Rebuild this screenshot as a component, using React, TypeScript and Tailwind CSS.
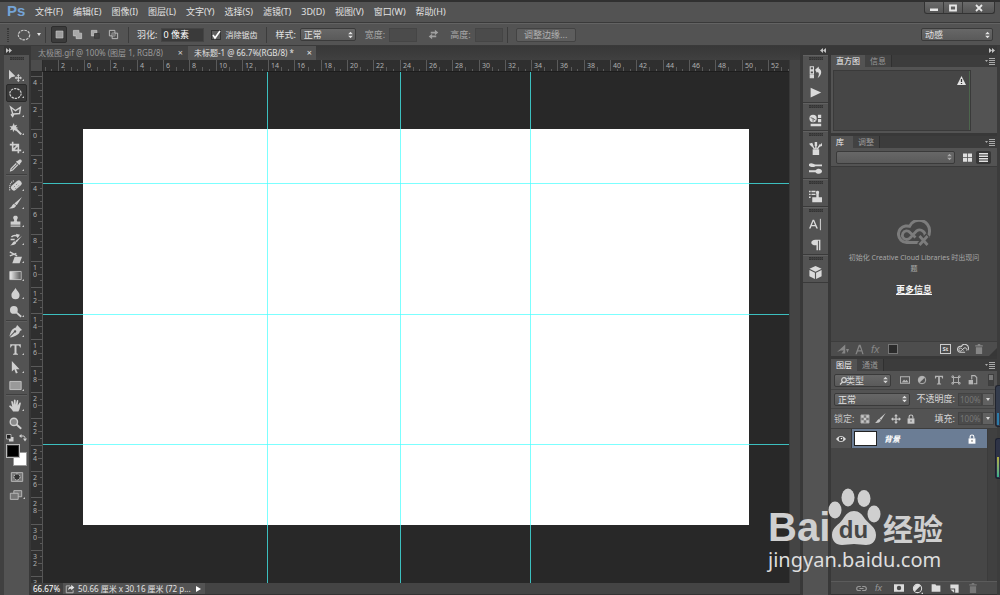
import type { ReactNode } from "react";

const UNIT = 26.3;

/* ---------- shared pieces ---------- */

function Icon({ children, size = "w-[14px] h-[14px]" }: { children: ReactNode; size?: string }) {
  return (
    <svg viewBox="0 0 16 16" className={`${size} shrink-0`} fill="currentColor" aria-hidden="true">
      {children}
    </svg>
  );
}

function UpDown() {
  return (
    <svg viewBox="0 0 6 8" className="pointer-events-none absolute top-1/2 right-[3px] h-[7px] w-[5px] -translate-y-1/2" fill="currentColor">
      <path d="M3 0 5.8 3H.2zM3 8 .2 5h5.6z" />
    </svg>
  );
}

function Drop({ label, value, className, pad = "pl-[3px]" }: { label: string; value: string; className: string; pad?: string }) {
  return (
    <span className={`relative block h-[13px] shrink-0 ${className}`}>
      <select
        aria-label={label}
        className={`block h-full w-full appearance-none rounded-[2px] border border-[#3a3a3a] bg-linear-to-b from-[#676767] to-[#5a5a5a] pr-2 leading-[11px] ${pad}`}
      >
        <option>{value}</option>
      </select>
      <UpDown />
    </span>
  );
}

function Grip() {
  return <div className="mx-auto h-[3px] w-[14px] border-y border-dotted border-[#333] bg-[#404040]" />;
}

function VLine() {
  return <div className="h-4 w-px shrink-0 bg-[#3c3c3c]" />;
}

function DoubleArrow({ left }: { left?: boolean }) {
  return (
    <svg viewBox="0 0 6 5" className="h-[5px] w-[6px]" fill="#c4c4c4">
      {left ? <path d="M3 0v5L0 2.5zM6 0v5L3 2.5z" /> : <path d="M0 0v5l3-2.5zM3 0v5l3-2.5z" />}
    </svg>
  );
}

/* ---------- menu and options bars ---------- */

const MENUS = ["文件(F)", "编辑(E)", "图像(I)", "图层(L)", "文字(Y)", "选择(S)", "滤镜(T)", "3D(D)", "视图(V)", "窗口(W)", "帮助(H)"];

function MenuBar() {
  return (
    <header className="flex h-[23px] shrink-0 items-start border-t-2 border-b border-t-[#303030] border-b-[#3a3a3a] bg-[#535353] pl-[7px]">
      <h1 className="w-7 font-[Arial,'Liberation_Sans',sans-serif] text-[15px] leading-[18px] font-bold text-[#74a3d6]">Ps</h1>
      <nav className="flex gap-[10px] text-[9px] leading-[20px]">
        {MENUS.map((m) => (
          <button key={m} className="whitespace-nowrap">{m}</button>
        ))}
      </nav>
      <div className="mr-[5px] ml-auto flex h-3 overflow-hidden rounded-b-[3px] border border-t-0 border-[#333] bg-linear-to-b from-[#6a6a6a] to-[#555] text-[#e8e8e8]">
        <button aria-label="最小化" className="flex w-[19px] items-center justify-center border-r border-[#3a3a3a]">
          <svg viewBox="0 0 8 8" className="h-2 w-2" fill="currentColor"><path d="M0 4.500h8v2.500H0z" /></svg>
        </button>
        <button aria-label="最大化" className="flex w-[19px] items-center justify-center border-r border-[#3a3a3a]">
          <svg viewBox="0 0 8 8" className="h-2 w-2" fill="none" stroke="currentColor" strokeWidth="1.800"><path d="M1 1.500h6v5H1z" /></svg>
        </button>
        <button aria-label="关闭" className="flex w-[31px] items-center justify-center">
          <svg viewBox="0 0 8 8" className="h-2 w-2" stroke="currentColor" strokeWidth="1.800"><path d="m1 1 6 6M7 1 1 7" /></svg>
        </button>
      </div>
    </header>
  );
}

const COMBINE: { name: string; art: ReactNode }[] = [
  { name: "新选区", art: <path d="M3 3h10v10H3z" fill="#9c9c9c" stroke="#ccc" /> },
  { name: "添加到选区", art: <path d="M2 2h8v4h4v8H6v-4H2z" fill="#a8a8a8" stroke="#ccc" /> },
  { name: "从选区减去", art: <><path d="M2 2h8v4H6v4H2z" fill="#a8a8a8" stroke="#ccc" /><path d="M6.500 6.500h7v7h-7z" fill="#444" stroke="#333" /></> },
  { name: "与选区交叉", art: <><path d="M2 2h8v8H2zM6 6h8v8H6z" fill="none" stroke="#bbb" strokeWidth="1.400" /><path d="M6 6h4v4H6z" fill="#777" /></> },
];

function OptionsBar() {
  return (
    <section className="flex h-[23px] shrink-0 items-center border-t border-b border-t-[#636363] border-b-[#3a3a3a] bg-[#535353] pl-[7px] text-[9px] whitespace-nowrap">
      <div className="mr-2 h-[14px] w-[2px] border-x border-dotted border-[#383838]" />
      <button aria-label="椭圆选框工具" className="flex items-center gap-[6px]">
        <Icon><ellipse cx="8" cy="8" rx="6.500" ry="5.500" fill="none" stroke="#c9c9c9" strokeWidth="1.300" strokeDasharray="3 1" /></Icon>
        <svg viewBox="0 0 4 3" className="h-[3px] w-1" fill="currentColor"><path d="M0 0h4L2 3z" /></svg>
      </button>
      <div className="mr-[5px] ml-1"><VLine /></div>
      <div className="flex gap-[2px]">
        {COMBINE.map((c, i) => (
          <button
            key={c.name}
            aria-label={c.name}
            className={i === 0 ? "flex h-[17px] w-4 items-center justify-center rounded-[2px] border border-[#2d2d2d] bg-[#3b3b3b]" : "flex h-[17px] w-4 items-center justify-center"}
          >
            <Icon size="w-[11px] h-[11px]">{c.art}</Icon>
          </button>
        ))}
      </div>
      <div className="mr-2 ml-[7px]"><VLine /></div>
      <label className="flex items-center gap-1">
        羽化:
        <input defaultValue="0 像素" className="h-[14px] w-[43px] border border-[#444] bg-[#3a3a3a] pl-px text-white" />
      </label>
      <label className="ml-[7px] flex items-center gap-1 text-[8px]">
        <span className="grid">
          <input type="checkbox" defaultChecked className="peer col-start-1 row-start-1 h-[10px] w-[10px] appearance-none border border-[#333] bg-[#5f5f5f]" />
          <svg viewBox="0 0 10 10" className="pointer-events-none col-start-1 row-start-1 hidden h-[10px] w-[10px] peer-checked:block" fill="none" stroke="#fff" strokeWidth="1.600"><path d="m2 5 2 3 5-7" /></svg>
        </span>
        消除锯齿
      </label>
      <div className="mr-2 ml-[9px]"><VLine /></div>
      <span className="mr-1">样式:</span>
      <Drop label="样式" value="正常" className="w-[56px]" />
      <label className="ml-[9px] flex items-center gap-1 text-[#a8a8a8]">
        宽度:
        <input className="h-[14px] w-7 border border-[#454545] bg-[#4b4b4b]" />
      </label>
      <button aria-label="互换宽高" className="mx-[11px] text-[#a0a0a0]">
        <Icon size="w-[11px] h-[11px]"><path d="M4 4h6V1l5 4-5 4V6.500H4zM12 12H6v3l-5-4 5-4v2.500h6z" /></Icon>
      </button>
      <label className="flex items-center gap-1 text-[#a8a8a8]">
        高度:
        <input className="h-[14px] w-7 border border-[#454545] bg-[#4b4b4b]" />
      </label>
      <div className="mr-2 ml-1"><VLine /></div>
      <button className="h-[14px] w-[60px] rounded-[2px] border border-[#434343] bg-[#5d5d5d] leading-[11px] text-[#b0b0b0]">调整边缘...</button>
      <div className="mr-[7px] ml-auto"><Drop label="工作区" value="动感" className="w-[72px]" /></div>
    </section>
  );
}

/* ---------- tool column ---------- */

const TOOLS: ({ name: string; art: ReactNode; plain?: boolean } | null)[] = [
  { name: "移动工具", art: <path d="M0 1v12l3-2.700L8 9zM11.500 6 13.500 8.300h-1.300v2h1.600V9L16 11l-2.200 2v-1.300h-1.600v2h1.300L11.500 16l-2-2.300h1.300v-2H9.200V13L7 11l2.200-2v1.300h1.600v-2H9.500z" /> },
  { name: "椭圆选框工具", art: <ellipse cx="8" cy="8" rx="7" ry="6" fill="none" stroke="currentColor" strokeWidth="1.400" strokeDasharray="3 1" /> },
  { name: "多边形套索工具", art: <path d="M2 2.500 8 7l6-4-1 7.500-7 .500-1.500 3L3 12l1.500-1.500z" fill="none" stroke="currentColor" strokeWidth="1.700" /> },
  { name: "快速选择工具", art: <><path d="m7 6 8 8" stroke="currentColor" strokeWidth="2.600" /><path d="m6 0 .800 3L10 2 8.500 5l3 1-3 1 1 3L6.700 8.500 5 11.500 4.500 8 1 9l2-3-2.500-2L4 4z" /></> },
  { name: "裁剪工具", art: <path d="M4.500 1v10.500H15M1 4.500h10.500V15M5 11l6-6" fill="none" stroke="currentColor" strokeWidth="2" /> },
  { name: "吸管工具", art: <><path d="M15 1c1.500 1.500.500 3.500-1.500 4.500l.500.500-1.500 1.500L8.500 3.500 10 2l.500.500C12 .500 14 0 15 1z" /><path d="M9 5.500 2.500 12 2 14.500 4.500 13.500 11 7" fill="none" stroke="currentColor" strokeWidth="1.500" /></> },
  null,
  { name: "污点修复画笔工具", art: <><path d="M1 14C0 8 2 3 7 2" fill="none" stroke="currentColor" strokeWidth="1.400" strokeDasharray="1.500 1" /><rect x="1.500" y="4.500" width="15" height="7" rx="3.500" transform="rotate(-42 9 8)" /><path d="m6 10 1-1m1 3 1-1m0-4 1-1m1 3 1-1" stroke="#555" /></> },
  { name: "画笔工具", art: <path d="M16 0 9.500 10 6.500 8zM6 8.300l2.700 2.200C8 13.500 4.500 14.500 0 14 4 12.500 3.500 9.500 6 8.300z" /> },
  { name: "仿制图章工具", art: <path d="M8 1c3 0 3.500 2.500 2 4.500-.500 1-.500 2 .500 2.500H14v4H2V8h3.500c1-.500 1-1.500.500-2.500C4.500 3.500 5 1 8 1zM2 13h12v1.500H2z" /> },
  { name: "历史记录画笔工具", art: <><path d="M16 3.500 9.500 11.500 7.500 10zM7 10l2 1.700C8.500 14.500 5 15.500 1 15c3.500-1 3-4.500 6-5z" /><path d="M3 5c3-3 7-2 8 0M2 8h5" fill="none" stroke="currentColor" strokeWidth="1.900" /><path d="M8.500 1 13.500 2l-3 4.500z" /></> },
  { name: "橡皮擦工具", art: <><path d="m1 1 9 5M1 6l8-3" stroke="currentColor" strokeWidth="1.700" /><path d="M7 7h9l-3 8H4z" /></> },
  { name: "渐变工具", art: <><defs><linearGradient id="ramp"><stop stopColor="#eee" /><stop offset="1" stopColor="#555" /></linearGradient></defs><path d="M1 3h14v10H1z" fill="url(#ramp)" stroke="#ccc" /></> },
  { name: "模糊工具", art: <path d="M8 1c1 3 5 5.500 5 9a5 5 0 0 1-10 0C3 6.500 7 4 8 1z" /> },
  { name: "减淡工具", art: <><circle cx="6" cy="6" r="4.800" /><path d="m9 9 6 5.500" stroke="currentColor" strokeWidth="2.200" /></> },
  null,
  { name: "钢笔工具", art: <path d="m10 0 6 6-2.500 1.500C12.500 11.500 9.500 13.500 2 15.500l-.700-.700L7 9.300a1.500 1.500 0 1 0-1-1L.500 14C2 8 3.500 4.500 8.500 3z" /> },
  { name: "文字工具", art: <path d="M1.500 1.500h13v4h-1C13.200 4 12.500 3.200 11 3.200H9.200V12c0 1 .500 1.200 1.800 1.300v1.200H5v-1.200C6.300 13.200 6.800 13 6.800 12V3.200H5C3.500 3.200 2.800 4 2.500 5.500h-1z" /> },
  { name: "路径选择工具", art: <path d="M3.500 0v13l3-2.700L8.500 15.500l2.300-1L8.700 10H13z" /> },
  { name: "矩形工具", art: <path d="M1 3h14v10H1z" fill="#999" stroke="#ccc" /> },
  null,
  { name: "抓手工具", art: <path d="M5 15.500c-1-2-3-4-5-6.500.500-1.500 2-1 4 .800L2.700 3.500c0-1.500 1.500-1.500 2.200 0L6 7V1.800c.200-1.700 2-1.700 2.200 0V7l1.300-5c.500-1.300 2.200-.900 1.900.600L10.700 8l2-3.200c.800-1 2.300-.500 1.800 1C13.500 9 13.500 12.500 11.500 15.500z" /> },
  { name: "缩放工具", art: <><circle cx="6" cy="6" r="4.500" fill="#8a8a8a" stroke="currentColor" strokeWidth="1.700" /><path d="m9 9 6 5.500" stroke="currentColor" strokeWidth="2.400" /></>, plain: true },
];

function Corner() {
  return <svg viewBox="0 0 3 3" className="mb-[3px] h-[2px] w-[2px] self-end" fill="#c8c8c8"><path d="M3 0v3H0z" /></svg>;
}

function ToolColumn() {
  return (
    <aside className="flex w-[31px] shrink-0 flex-col border-r-2 border-l-4 border-r-[#383838] border-l-[#404040] bg-[#535353]">
      <div className="flex h-[9px] items-center bg-[#383838] pl-[2px]"><DoubleArrow /></div>
      <div className="h-[11px] pt-[2px]"><Grip /></div>
      {TOOLS.map((t, i) =>
        t === null ? (
          <div key={i} className="mx-[2px] h-[2px] border-t border-b border-t-[#3f3f3f] border-b-[#5e5e5e]" />
        ) : (
          <button
            key={t.name}
            aria-label={t.name}
            className={`mx-[2px] flex h-[18px] items-center justify-center text-[#d0d0d0] ${i === 1 ? "rounded-[2px] border border-[#2a2a2a] bg-[#383838]" : ""}`}
          >
            <Icon size="w-[13px] h-[13px]">{t.art}</Icon>
            {t.plain ? <span className="w-[2px]" /> : <Corner />}
          </button>
        ),
      )}
      <div className="flex h-[11px] items-center justify-around pt-px text-[#d0d0d0]">
        <Icon size="w-2 h-2"><path d="M6 6h9v9H6z" /><path d="M1 1h9v9H1z" fill="#222" stroke="#ccc" strokeWidth="1.500" /></Icon>
        <Icon size="w-2 h-2"><path d="M4 4h4c3 0 4 1 4 5" fill="none" stroke="currentColor" strokeWidth="2" /><path d="M5 0v8L0 4zM8 9h8l-4 6z" /></Icon>
      </div>
      <div className="mx-auto mt-px grid h-[22px] w-[21px]">
        <button aria-label="背景色" className="col-start-1 row-start-1 h-[14px] w-[14px] place-self-end border border-[#999] bg-white" />
        <button aria-label="前景色" className="col-start-1 row-start-1 h-[14px] w-[14px] border border-[#bbb] bg-black ring-1 ring-[#333] ring-inset" />
      </div>
      <button aria-label="快速蒙版" className="mx-auto mt-1 text-[#c0c0c0]">
        <Icon><path d="M1.500 3h13v10h-13z" fill="#777" stroke="currentColor" /><circle cx="8" cy="8" r="3.500" fill="#333" stroke="#ddd" strokeDasharray="2 1" /></Icon>
      </button>
      <button aria-label="屏幕模式" className="mx-[2px] mt-1 flex justify-center text-[#c0c0c0]">
        <Icon><path d="M5.500 3h9v7h-9z" fill="#777" stroke="currentColor" /><path d="M1.500 6h9v7h-9z" fill="#777" stroke="currentColor" /></Icon>
        <Corner />
      </button>
    </aside>
  );
}

/* ---------- document area ---------- */

const steps = (from: number, to: number) => Array.from({ length: to - from + 1 }, (_, i) => from + i);

function TopRuler() {
  return (
    <div className="relative h-3 flex-1 overflow-hidden border-b border-[#1d1d1d] bg-[#2f2f2f] text-[7px] leading-3 text-[#b0b0b0]">
      {steps(-1, 26).map((n) => (
        <span key={n} className="absolute top-0 h-full border-l border-[#5a5a5a] pl-[2px]" style={{ left: Math.round(41 + n * UNIT) }}>
          {Math.abs(n * 2)}
        </span>
      ))}
      {steps(-6, 107).filter((n) => n % 4 !== 0).map((n) => (
        <span key={n} className={`absolute bottom-0 w-px bg-[#5a5a5a] ${n % 2 === 0 ? "h-[4px]" : "h-[2px]"}`} style={{ left: Math.round(41 + (n * UNIT) / 4) }} />
      ))}
    </div>
  );
}

function SideRuler() {
  return (
    <div className="relative w-3 shrink-0 overflow-hidden border-r border-[#555] bg-[#2f2f2f] text-[7px] leading-[7px] text-[#b0b0b0]">
      {steps(-2, 17).map((n) => (
        <span key={n} className="absolute left-0 flex w-full flex-col border-t border-[#5a5a5a] pt-[2px] pl-[2px]" style={{ top: Math.round(57 + n * UNIT) }}>
          {String(Math.abs(n * 2)).split("").map((d, i) => <span key={i}>{d}</span>)}
        </span>
      ))}
      {steps(-8, 67).filter((n) => n % 4 !== 0).map((n) => (
        <span key={n} className={`absolute right-0 h-px bg-[#5a5a5a] ${n % 2 === 0 ? "w-[4px]" : "w-[2px]"}`} style={{ top: Math.round(57 + (n * UNIT) / 4) }} />
      ))}
    </div>
  );
}

function Artboard() {
  return (
    <main className="relative min-w-0 flex-1 overflow-hidden bg-[#282828]">
      <div className="absolute top-[57px] left-10 h-[396px] w-[666px] bg-white" />
      {["left-[224px]", "left-[357px]", "left-[487px]"].map((c) => (
        <div key={c} className={`absolute inset-y-0 w-px bg-[#44ffff]/70 ${c}`} />
      ))}
      {["top-[111px]", "top-[242px]", "top-[372px]"].map((c) => (
        <div key={c} className={`absolute inset-x-0 h-px bg-[#44ffff]/70 ${c}`} />
      ))}
    </main>
  );
}

function DocumentArea() {
  return (
    <section className="flex min-w-0 flex-1 flex-col">
      <div className="flex h-[14px] shrink-0 bg-linear-to-b from-[#383838] to-[#404040] text-[9px] leading-[14px] whitespace-nowrap">
        <div className="flex w-[157px] items-center justify-between bg-[#424242] pr-[5px] pl-[7px] text-[#9a9a9a]">
          <button className="text-[8px]">太极图.gif @ 100% (图层 1, RGB/8)</button>
          <button aria-label="关闭太极图" className="text-[#ccc]">×</button>
        </div>
        <div className="flex w-32 items-center justify-between bg-[#535353] pr-1 pl-[6px]">
          <button className="text-[8px]">未标题-1 @ 66.7%(RGB/8) *</button>
          <button aria-label="关闭未标题-1">×</button>
        </div>
      </div>
      <div className="flex min-h-0 flex-1">
        <div className="flex min-w-0 flex-1 flex-col">
          <div className="flex shrink-0">
            <div className="h-3 w-3 border-r border-b border-[#2a2a2a] bg-[#4c4c4c]" />
            <TopRuler />
          </div>
          <div className="flex flex-1">
            <SideRuler />
            <Artboard />
          </div>
        </div>
        <div className="w-[11px] border-l border-[#383838] bg-[#444]" />
      </div>
      <footer className="flex h-3 shrink-0 items-center border-b border-[#333] bg-[#444] text-[8px] leading-[11px]">
        <span className="bg-[#3f3f3f] pr-[3px] pl-[2px] text-white">66.67%</span>
        <div className="flex h-full items-center gap-[3px] bg-[#535353] pr-1 pl-[2px] whitespace-nowrap">
          <Icon size="w-[10px] h-[10px]"><path d="M8 3H2v11h11v-4" fill="none" stroke="#bbb" strokeWidth="1.500" /><path d="M10 1v3C7 4 5 6 5 10c1.500-2 3-2.500 5-2.500V10l5-4.500z" /></Icon>
          <span>50.66 厘米 x 30.16 厘米 (72 p...</span>
          <button aria-label="状态栏选项" className="ml-[2px]"><svg viewBox="0 0 5 6" className="h-[6px] w-[5px]" fill="#fff"><path d="M0 0v6l5-3z" /></svg></button>
        </div>
      </footer>
    </section>
  );
}

/* ---------- collapsed dock ---------- */

const DOCK: { name: string; art: ReactNode }[][] = [
  [
    { name: "历史记录", art: <><path d="M1.500 1h4v3.500h-4zM1.500 6h4v3.500h-4zM1.500 11h4v3.500h-4z" fill="none" stroke="currentColor" strokeWidth="1.300" /><path d="M1.500 11h4v3.500h-4z" /><path d="M7.500 4.500 12 .500v2.500c4 1.500 4.500 8-1.500 12 2.500-4.500 2-7.500-.500-7.500v1.500z" /></> },
    { name: "动作", art: <path d="M2 2v12l13-6z" /> },
  ],
  [{ name: "属性", art: <><circle cx="5" cy="5.500" r="4.500" /><path d="M11 1h4v4h-4zM11 6h4v4h-4zM2 12h13v3H2z" /><path d="m5 5.500 3 2M5 5.500l-3-1m3 1v4" stroke="#555" /></> }],
  [
    { name: "画笔预设", art: <><path d="M4.500 9h8v7h-8z" /><path d="M7 9 3 3M8.500 9V1M10 9l4-6" stroke="currentColor" strokeWidth="1.800" /><path d="m0 2 4-1 1.500 4-2.500.500zM7 0h3v5H7zM16 1v4l-4 1z" /></> },
    { name: "画笔", art: <><path d="M0 2.500C3 .500 5 2.500 8 3.200h8v2H8C5 7 2 6 0 5zM0 10.300h8c2-3 8-2.500 8 1.200s-6 4-8 1H0z" /></> },
  ],
  [{ name: "仿制源", art: <path d="M0 1h2v1.800H0zM0 4.500h2v1.800H0zM0 8h2v1.800H0zM3 1h5v1.800H3zM3 4.500h5v1.800H3zM10.500 1c2 0 2.500 2 1.500 4v4h4v6H4V9h5V5C8 3 8.500 1 10.500 1z" /> }],
  [
    { name: "字符", art: <><path d="M0 13 4.500 2h1.800L11 13H9L7.800 10H3L2 13zM3.600 8.500h3.700L5.400 4z" /><path d="M14 1v14" stroke="currentColor" strokeWidth="1.200" /></> },
    { name: "段落", art: <path d="M14 2v13h-1.800V3.500H11V15H9.200V9C1 9.500 1 2 8 2z" /> },
  ],
  [{ name: "3D", art: <path d="m8 0 7.500 3.300L8 7 .500 3.300zM.500 4.800l6.800 3.400V16L.500 12.500zM15.500 4.800 8.700 8.200V16l6.800-3.500z" /> }],
];

function Dock() {
  return (
    <aside className="flex w-[31px] shrink-0 flex-col border-r-[3px] border-l-[3px] border-[#383838] bg-[#535353]">
      <div className="flex h-[9px] shrink-0 items-center justify-end bg-[#383838] pr-[2px]"><DoubleArrow left /></div>
      {DOCK.map((group) => (
        <div key={group[0].name} className="border-t border-b border-t-[#616161] border-b-[#3a3a3a]">
          <div className="h-[6px] pt-px"><Grip /></div>
          {group.map((d) => (
            <button key={d.name} aria-label={d.name} className="flex h-5 w-full items-center justify-center text-[#dadada]">
              <Icon size="w-[13px] h-[13px]">{d.art}</Icon>
            </button>
          ))}
        </div>
      ))}
    </aside>
  );
}

/* ---------- right-hand panels ---------- */

function Tabs({ active, other }: { active: string; other: string }) {
  return (
    <div className="flex h-3 shrink-0 items-stretch bg-[#3c3c3c] text-[8px] leading-3">
      <button className="min-w-[22px] bg-[#535353] px-[5px] text-left text-[#f0f0f0]">{active}</button>
      <button className="border-r border-[#303030] bg-[#424242] px-[5px] text-[#999]">{other}</button>
      <button aria-label="面板菜单" className="mr-[2px] ml-auto">
        <svg viewBox="0 0 10 7" className="h-[7px] w-[10px]" fill="#aaa"><path d="M0 2h3L1.500 4zM4 0h6v1H4zM4 2h6v1H4zM4 4h6v1H4zM4 6h6v1H4z" /></svg>
      </button>
    </div>
  );
}

function Cloud({ className, children }: { className: string; children?: ReactNode }) {
  return (
    <svg viewBox="0 0 34 27" className={className} fill="none" stroke="currentColor">
      <path d="M23 22.500H9.500a8.300 8.300 0 0 1-1-16.500c1.500-.200 3 0 4 .300A10.500 10.500 0 0 1 32.500 11.500c0 2.500-.500 4-1.500 5.500" strokeWidth="3" />
      <path d="M18.500 17.500 13 12.500a4.300 4.300 0 1 0-3.500 7c1.500 0 2.500-.500 3.500-1.500l6.500-7a5.500 5.500 0 0 1 8 7" strokeWidth="2.800" />
      {children}
    </svg>
  );
}

function Histogram() {
  return (
    <section className="shrink-0 bg-[#535353]">
      <Tabs active="直方图" other="信息" />
      <div className="pt-[3px] pr-[26px] pb-[2px] pl-[2px]">
        <div className="flex h-[61px] justify-end border border-[#3a3a3a] bg-[#464646]">
          <svg viewBox="0 0 9 9" className="mt-[5px] mr-[3px] h-[9px] w-[9px]"><path d="M4.500 0 9 9H0z" fill="#e4e4e4" /><path d="M4.500 3v3M4.500 7v1" stroke="#333" strokeWidth="1.300" /></svg>
          <div className="w-px bg-[#4d664d]" />
        </div>
      </div>
    </section>
  );
}

function Library() {
  return (
    <section className="flex shrink-0 flex-col bg-[#464646]">
      <Tabs active="库" other="调整" />
      <div className="flex h-[19px] items-center border-b border-[#3a3a3a] bg-[#535353] pr-[6px] pl-[5px]">
        <div className="flex-1 text-[#aaa]"><Drop label="选择库" value="" className="w-full" /></div>
        <button aria-label="网格视图" className="ml-2 text-[#e0e0e0]"><Icon size="w-[9px] h-[9px]"><path d="M0 1h7.300v6.500H0zM8.700 1H16v6.500H8.700zM0 9h7.300v6.500H0zM8.700 9H16v6.500H8.700z" /></Icon></button>
        <button aria-label="列表视图" className="ml-1 flex h-[13px] w-[15px] items-center justify-center rounded-[2px] bg-[#363636] text-[#e0e0e0]"><Icon size="w-[9px] h-[9px]"><path d="M0 0h16v2.500H0zM0 4.500h16V7H0zM0 9h16v2.500H0zM0 13.500h16V16H0z" /></Icon></button>
      </div>
      <div className="flex h-[174px] flex-col items-center pt-[53px] text-center">
        <Cloud className="h-[27px] w-[34px] text-[#7c7c7c]">
          <path d="m22 15 9 10M31 15l-9 10" stroke="#464646" strokeWidth="5" />
          <path d="m22.500 16 8 9M30.500 16l-8 9" strokeWidth="2.800" />
        </Cloud>
        <p className="mt-[5px] px-4 text-[7px] leading-[11px] text-[#a8a8a8]">初始化 Creative Cloud Libraries 时出现问题</p>
        <a href="#more" className="mt-[9px] text-[9px] leading-[13px] font-bold text-[#f4f4f4] underline">更多信息</a>
      </div>
      <div className="flex h-[15px] items-center border-t border-[#3d3d3d] bg-[#4d4d4d] text-[#868686]">
        <span className="ml-[6px]"><Icon size="w-3 h-3"><path d="M0 12 11 2v12H6l3-4H5zM12 8h4l-2 5z" /></Icon></span>
        <span className="ml-[5px]"><Icon size="w-[11px] h-[11px]"><path d="M2 15 7 1h2.500L14 15h-2l-1-4H5.500L4 15zM6 9h4.500L8.300 3.500z" /></Icon></span>
        <i className="ml-[6px] w-3 font-[Arial,'Liberation_Sans',sans-serif] text-[11px] leading-3">fx</i>
        <span className="ml-[5px] h-[10px] w-[10px] border border-[#777] bg-[#2a2a2a]" />
        <span className="ml-auto flex h-[10px] w-[11px] items-center justify-center border border-[#ccc] text-[6px] leading-none font-bold text-[#ddd]">St</span>
        <Cloud className="ml-[6px] h-[10px] w-3 text-[#d0d0d0]" />
        <span className="ml-[5px]"><Icon size="w-[10px] h-[10px]"><path d="M2 2h4V0h4v2h4v2H2zM3 5h10v11H3z" /></Icon></span>
        <svg viewBox="0 0 8 8" className="ml-[5px] h-2 w-2 self-end" fill="#373737"><path d="M8 0v8H0z" /></svg>
      </div>
    </section>
  );
}

const LOCK = <><path d="M2.500 7h11v8.500h-11z" /><path d="M5 7V4.500c0-4 6-4 6 0V7" fill="none" stroke="currentColor" strokeWidth="1.700" /><path d="M8 9.500v3" stroke="#555" strokeWidth="1.500" /></>;

const FILTERS: ReactNode[] = [
  <path d="M0 2h16v12H0zM1.500 3.500v9h13v-9zM3 11.500l3.500-4.500 2 2.500 2-2 3 4z" fillRule="evenodd" />,
  <><circle cx="8" cy="8" r="6" fill="none" stroke="currentColor" strokeWidth="1.500" /><path d="M4 12.500A6 6 0 1 1 12.500 4z" /></>,
  <path d="M1.500 1h13v4.500h-1.500C12.700 4 12 3.200 11 3.200H9.400V13l2 1v1H4.600v-1l2-1V3.200H5C4 3.200 3.300 4 3 5.500H1.500z" />,
  <path d="M4 4h8v8H4zM1.500 1.500H4V4H1.500zM12 1.500h2.500V4H12zM1.500 12H4v2.500H1.500zM12 12h2.500v2.500H12z" fill="none" stroke="currentColor" strokeWidth="1.500" />,
  <><path d="M6 7V1h5l3 3v10H9" fill="none" stroke="currentColor" strokeWidth="1.700" /><path d="M1 8h7v7H1z" /></>,
];

function Percent({ label }: { label: string }) {
  return (
    <label className="ml-auto flex items-center text-[#d8d8d8]">
      {label}
      <input defaultValue="100%" className="ml-[3px] h-[13px] w-6 border border-[#434343] bg-[#4b4b4b] pl-px text-[8px] text-[#777]" />
      <span className="flex h-[13px] w-3 items-center justify-center border border-[#454545] bg-[#616161]">
        <svg viewBox="0 0 4 3" className="h-[3px] w-1" fill="currentColor"><path d="M0 0h4L2 3z" /></svg>
      </span>
    </label>
  );
}

function Layers() {
  return (
    <section className="flex flex-1 flex-col bg-[#464646] text-[9px]">
      <Tabs active="图层" other="通道" />
      <div className="flex h-[19px] items-center border-b border-[#444] bg-[#535353] px-[3px] text-[#b4b4b4]">
        <span className="relative text-[#d4d4d4]">
          <Drop label="筛选类型" value="类型" className="w-[57px]" pad="pl-[11px]" />
          <svg viewBox="0 0 8 8" className="pointer-events-none absolute top-[3px] left-[5px] h-2 w-2" fill="none" stroke="currentColor" strokeWidth="1.200"><circle cx="5" cy="3" r="2.300" /><path d="M3.500 5 1 7.500" /></svg>
        </span>
        <div className="ml-[9px] flex gap-[7px]">
          {FILTERS.map((f, i) => (
            <button key={i} aria-label={`筛选 ${i + 1}`}><Icon size="w-[10px] h-[10px]">{f}</Icon></button>
          ))}
        </div>
        <span className="ml-auto h-3 w-[6px] border border-[#3e3e3e] bg-linear-to-b from-[#777] from-50% to-[#404040] to-50%" />
      </div>
      <div className="flex h-[19px] items-center border-b border-[#444] bg-[#535353] px-[3px]">
        <Drop label="混合模式" value="正常" className="w-[76px]" />
        <Percent label="不透明度:" />
      </div>
      <div className="flex h-5 items-center border-b border-[#3d3d3d] bg-[#535353] px-[3px] whitespace-nowrap text-[#c8c8c8]">
        锁定:
        <div className="ml-[6px] flex items-center gap-[5px]">
          <Icon size="w-[10px] h-[10px]"><path d="M1.500 1.500h13v13h-13z" fill="#777" stroke="currentColor" /><path d="M2 2h4v4H2zM10 2h4v4h-4zM6 6h4v4H6zM2 10h4v4H2zM10 10h4v4h-4z" /></Icon>
          <Icon size="w-[11px] h-[11px]"><path d="M15.500 0 9 10 6.500 8zM6 8.500 8.500 11C7 14 4 15 0 14.500 3 13 3 10 6 8.500z" /></Icon>
          <Icon size="w-[10px] h-[10px]"><path d="M8 0 11 3.500H9V7h3.500V5l3.500 3-3.500 3V9H9v3.500h2L8 16l-3-3.500h2V9H3.500v2L0 8l3.500-3v2H7V3.500H5z" /></Icon>
          <Icon size="w-[10px] h-[10px]">{LOCK}</Icon>
        </div>
        <Percent label="填充:" />
      </div>
      <div className="flex flex-1">
        <ul className="flex-1">
          <li className="flex h-[19px]">
            <button aria-label="显示图层" className="flex w-[21px] items-center justify-center border-r border-[#3a3a3a] bg-[#535353] text-[#ddd]">
              <svg viewBox="0 0 10 8" className="h-2 w-[10px]"><path d="M0 4c3-4 7-4 10 0-3 4-7 4-10 0z" fill="currentColor" /><circle cx="5" cy="4" r="2.300" fill="#444" /><circle cx="5.500" cy="3.500" r=".8" fill="#fff" /></svg>
            </button>
            <button className="flex flex-1 items-center bg-[#6b7d95] pr-[10px] pl-[2px] text-[8px] text-white">
              <span className="h-[15px] w-[23px] border border-[#222] bg-white" />
              <i className="ml-[7px] flex-1 text-left font-bold">背景</i>
              <Icon size="w-[10px] h-[10px]">{LOCK}</Icon>
            </button>
          </li>
        </ul>
        <div className="w-[10px] border-l border-[#3b3b3b] bg-[#404040]" />
      </div>
      <footer className="flex h-[14px] items-center gap-2 border-t border-b border-t-[#5b5b5b] border-b-[#333] bg-[#4b4b4b] pl-[25px] text-[#dcdcdc]">
        <span className="text-[#999]"><Icon size="w-[11px] h-[11px]"><path d="M7 5H4a3 3 0 0 0 0 6h3M9 5h3a3 3 0 0 1 0 6H9M5 8h6" fill="none" stroke="currentColor" strokeWidth="1.600" /></Icon></span>
        <i className="w-[11px] font-[Arial,'Liberation_Sans',sans-serif] text-[9px] leading-3 text-[#999]">fx</i>
        <Icon size="w-[10px] h-[10px]"><path d="M0 2h16v12H0zM8 4.500a3.500 3.500 0 1 0 0 7 3.500 3.500 0 0 0 0-7z" fillRule="evenodd" /></Icon>
        <Icon size="w-[11px] h-[11px]">{FILTERS[1]}<path d="M14 14h2v2h-2z" /></Icon>
        <Icon size="w-[10px] h-[10px]"><path d="M1 2h6l1.500 2H15v10H1z" /></Icon>
        <Icon size="w-[11px] h-[11px]"><path d="M2 2h12v12H9V8H2z" /><path d="M2 9.500h5.500V14z" /></Icon>
        <span className="text-[#777]"><Icon size="w-[10px] h-[10px]"><path d="M2 2h4V0h4v2h4v2H2zM3 5h10v11H3z" /></Icon></span>
      </footer>
    </section>
  );
}

function PanelColumn() {
  return (
    <aside className="flex w-[169px] shrink-0 flex-col gap-[3px] border-r-[3px] border-[#3c3c3c] bg-[#383838]">
      <div className="flex h-[6px] shrink-0 items-center justify-end pt-[2px] pr-[2px]"><DoubleArrow /></div>
      <Histogram />
      <Library />
      <Layers />
    </aside>
  );
}

/* ---------- floating overlays ---------- */

function Watermark() {
  return (
    <div className="pointer-events-none absolute right-[57px] bottom-[21px] font-[Arial,'Liberation_Sans',sans-serif] text-[#cfcfcf]">
      <div className="flex items-end">
        <span className="w-[60px] text-[40px] leading-[38px] font-bold">Bai</span>
        <span className="grid h-[58px] w-[54px]">
          <svg viewBox="0 0 54 58" className="col-start-1 row-start-1 h-[58px] w-[54px]" fill="currentColor">
            <ellipse cx="7" cy="22" rx="6.500" ry="8.500" />
            <ellipse cx="20" cy="9.500" rx="6.500" ry="9" />
            <ellipse cx="36" cy="10.500" rx="6.500" ry="8.500" />
            <ellipse cx="46" cy="26" rx="6.500" ry="8.500" />
            <path d="M26 23c5 0 8 3 11 8 4 5 11 8 11 16 0 7-5 10-10 10-4 0-8-1-12-1s-8 1-12 1C8 57 4 53 4 47c0-8 7-10 11-16 3-5 6-8 11-8z" />
          </svg>
          <span className="col-start-1 row-start-1 self-end pr-[3px] pb-1 text-center text-[24px] leading-6 font-bold text-[#464646]">du</span>
        </span>
        <span className="ml-px font-['Noto_Sans_CJK_SC',sans-serif] text-[30px] leading-[38px] font-bold">经验</span>
      </div>
      <div className="font-['Noto_Sans',sans-serif] text-[20px] leading-7 text-[#dedede]">jingyan.baidu.com</div>
    </div>
  );
}

function EdgeWidgets() {
  return (
    <>
      <div className="absolute top-[385px] right-0 flex h-[42px] w-[5px] items-end rounded-l-[3px] border border-r-0 border-[#20242e] bg-[#343c4c] p-px"><span className="h-3 w-[2px] bg-[#2c7ba8]" /></div>
      <div className="absolute top-[438px] right-0 flex h-[41px] w-[5px] items-end rounded-l-[3px] border border-r-0 border-[#1c2030] bg-[#2e3346] p-px"><span className="h-5 w-[2px] bg-linear-to-b from-[#b3ad3c] to-[#2fae8c]" /></div>
    </>
  );
}

export default function App() {
  return (
    <div className="relative flex min-h-screen flex-col overflow-hidden bg-[#535353] font-['Noto_Sans','Noto_Sans_CJK_SC',sans-serif] text-[#e2e2e2]">
      <MenuBar />
      <OptionsBar />
      <div className="flex flex-1">
        <ToolColumn />
        <DocumentArea />
        <Dock />
        <PanelColumn />
      </div>
      <EdgeWidgets />
      <Watermark />
    </div>
  );
}
